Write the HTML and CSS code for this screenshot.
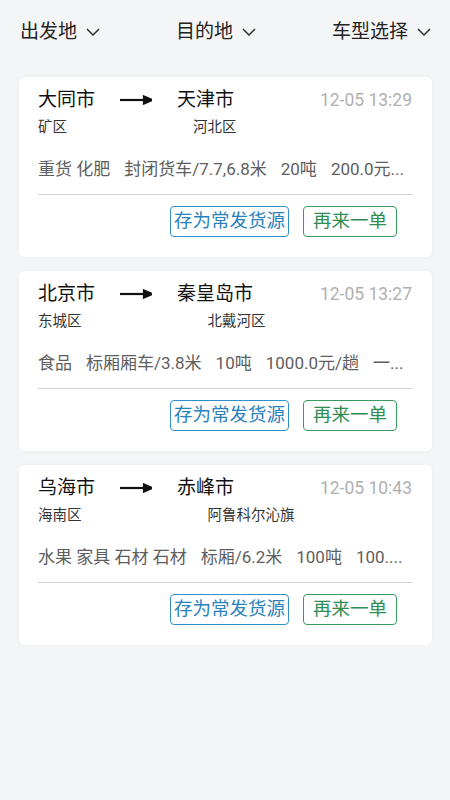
FILE: index.html
```html
<!DOCTYPE html>
<html lang="zh-CN">
<head>
    <meta charset="UTF-8">
    <meta name="viewport" content="width=device-width, initial-scale=1.0">
    <title>我的发货</title>
    <link rel="stylesheet" href="styles.css">
</head>
<body>

<header class="filter-bar">
    <div class="filter-item">出发地
        <svg class="chevron" width="14" height="8" viewBox="0 0 14 8"><polyline points="1,1 7,7 13,1"/></svg>
    </div>
    <div class="filter-item">目的地
        <svg class="chevron" width="14" height="8" viewBox="0 0 14 8"><polyline points="1,1 7,7 13,1"/></svg>
    </div>
    <div class="filter-item">车型选择
        <svg class="chevron" width="14" height="8" viewBox="0 0 14 8"><polyline points="1,1 7,7 13,1"/></svg>
    </div>
</header>

<main class="order-list">

    <div class="order-card">
        <div class="route">
            <span class="city">大同市</span>
            <svg class="arrow" width="32" height="10" viewBox="0 0 32 10"><line x1="0" y1="5" x2="25" y2="5"/><polygon points="24,1.5 32,5 24,8.5"/></svg>
            <span class="city">天津市</span>
            <span class="time">12-05 13:29</span>
        </div>
        <div class="districts">
            <span class="district from">矿区</span>
            <span class="district">河北区</span>
        </div>
        <div class="details">重货 化肥<span class="sep"></span>封闭货车/7.7,6.8米<span class="sep"></span>20吨<span class="sep"></span>200.0元...</div>
        <div class="divider"></div>
        <div class="actions">
            <a href="#" class="btn btn-save">存为常发货源</a>
            <a href="#" class="btn btn-again">再来一单</a>
        </div>
    </div>

    <div class="order-card">
        <div class="route">
            <span class="city">北京市</span>
            <svg class="arrow" width="32" height="10" viewBox="0 0 32 10"><line x1="0" y1="5" x2="25" y2="5"/><polygon points="24,1.5 32,5 24,8.5"/></svg>
            <span class="city">秦皇岛市</span>
            <span class="time">12-05 13:27</span>
        </div>
        <div class="districts">
            <span class="district from">东城区</span>
            <span class="district">北戴河区</span>
        </div>
        <div class="details">食品<span class="sep"></span>标厢厢车/3.8米<span class="sep"></span>10吨<span class="sep"></span>1000.0元/趟<span class="sep"></span>一...</div>
        <div class="divider"></div>
        <div class="actions">
            <a href="#" class="btn btn-save">存为常发货源</a>
            <a href="#" class="btn btn-again">再来一单</a>
        </div>
    </div>

    <div class="order-card">
        <div class="route">
            <span class="city">乌海市</span>
            <svg class="arrow" width="32" height="10" viewBox="0 0 32 10"><line x1="0" y1="5" x2="25" y2="5"/><polygon points="24,1.5 32,5 24,8.5"/></svg>
            <span class="city">赤峰市</span>
            <span class="time">12-05 10:43</span>
        </div>
        <div class="districts">
            <span class="district from">海南区</span>
            <span class="district">阿鲁科尔沁旗</span>
        </div>
        <div class="details">水果 家具 石材 石材<span class="sep"></span>标厢/6.2米<span class="sep"></span>100吨<span class="sep"></span>100....</div>
        <div class="divider"></div>
        <div class="actions">
            <a href="#" class="btn btn-save">存为常发货源</a>
            <a href="#" class="btn btn-again">再来一单</a>
        </div>
    </div>

</main>

</body>
</html>
```

FILE: styles.css
```css
body {
    font-family: 'Roboto', 'Noto Sans CJK SC', sans-serif;
    margin: 0;
    padding: 0;
    background-color: #f4f5f7;
    color: #222;
}

.filter-bar {
    display: flex;
    justify-content: space-between;
    padding: 20px 19px 0 20px;
}

.filter-item {
    display: flex;
    align-items: center;
    font-size: 19px;
    line-height: 24px;
    color: #222;
}

.chevron {
    margin-left: 9px;
    fill: none;
    stroke: #333;
    stroke-width: 1.5;
}

.order-list {
    display: flex;
    flex-direction: column;
    gap: 14px;
    padding: 33px 18px 0 19px;
}

.order-card {
    background: white;
    border-radius: 6px;
    padding: 11px 20px 20px 19px;
    box-shadow: 0 0 4px rgba(0, 0, 0, 0.04);
}

.route {
    display: flex;
    align-items: center;
    height: 24px;
}

.city {
    font-size: 19px;
    line-height: 24px;
    color: #111;
}

.arrow {
    margin: 0 25px;
    stroke: #111;
    stroke-width: 2.2;
    fill: #111;
}

.time {
    margin-left: auto;
    font-size: 17.5px;
    color: #b0b0b0;
}

.districts {
    display: flex;
    margin-top: 7px;
    font-size: 14.5px;
    line-height: 18px;
    color: #333;
}

.district.from {
    margin-right: 126px;
}

.details {
    margin-top: 22px;
    font-size: 17px;
    line-height: 20px;
    color: #5e5e5e;
    white-space: nowrap;
}

.sep {
    display: inline-block;
    width: 14px;
}

.divider {
    margin-top: 15px;
    height: 1px;
    background: #d2d2d2;
}

.actions {
    display: flex;
    justify-content: flex-end;
    gap: 14px;
    margin-top: 11px;
    padding-right: 15px;
}

.btn {
    display: block;
    font-size: 18.5px;
    line-height: 29px;
    border-radius: 4px;
    text-decoration: none;
}

.btn-save {
    padding: 0 3px;
    color: #2a82bd;
    border: 1px solid #2f8fcb;
}

.btn-again {
    padding: 0 9px;
    color: #2e8d52;
    border: 1px solid #3a9a5e;
}
```
